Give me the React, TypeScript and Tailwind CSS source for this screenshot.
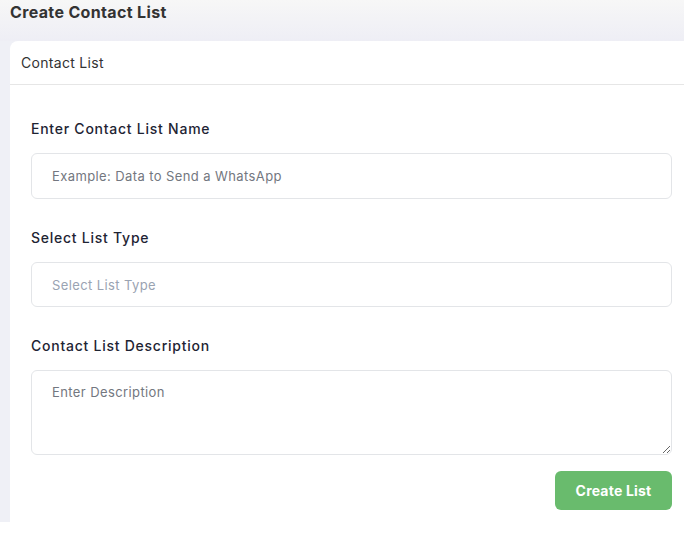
import { useState, FormEvent } from 'react'

const fieldClass =
  'w-full rounded-md border border-[#e3e5e8] bg-white px-[20px] text-[13px] tracking-[0.4px] text-[#374151] outline-none'

const labelClass = 'block text-[14px] font-medium leading-[22px] tracking-[0.75px] text-[#1e2433]'

export default function App() {
  const [listName, setListName] = useState('')
  const [listType, setListType] = useState('')
  const [description, setDescription] = useState('')

  const onSubmit = (event: FormEvent<HTMLFormElement>) => {
    event.preventDefault()
  }

  return (
    <div className="overflow-x-hidden bg-white font-['Inter',sans-serif]">
      <div className="bg-[#eff0f6]">
        <div className="h-[41px] bg-gradient-to-b from-[#f7f7f7] to-[#eeeef5] pl-[10px] pt-[1px]">
          <h1 className="text-[16px] font-bold leading-[22px] tracking-[0.35px] text-[#333333]">
            Create Contact List
          </h1>
        </div>

        <div className="ml-[10px] w-[683px] rounded-tl-lg bg-white">
          <div className="flex h-[44px] items-center border-b border-[#e6e6e6] px-[11px]">
            <h2 className="text-[14px] tracking-[0.3px] text-[#333333]">Contact List</h2>
          </div>

          <form className="pl-[21px] pr-[21px] pb-[12px] pt-[33px]" onSubmit={onSubmit}>
            <label className="block">
              <span className={labelClass}>Enter Contact List Name</span>
              <input
                className={`${fieldClass} mt-[13px] h-[46px] placeholder:text-[#737780]`}
                placeholder="Example: Data to Send a WhatsApp"
                value={listName}
                onChange={(e) => setListName(e.target.value)}
              />
            </label>

            <label className="mt-[28px] block">
              <span className={labelClass}>Select List Type</span>
              <input
                className={`${fieldClass} mt-[13px] h-[45px] placeholder:text-[#9aa3b2]`}
                placeholder="Select List Type"
                value={listType}
                onChange={(e) => setListType(e.target.value)}
              />
            </label>

            <label className="mt-[28px] block">
              <span className={labelClass}>Contact List Description</span>
              <textarea
                className={`${fieldClass} mt-[13px] block h-[85px] py-[12px] leading-[18px] placeholder:text-[#737780]`}
                placeholder="Enter Description"
                value={description}
                onChange={(e) => setDescription(e.target.value)}
              />
            </label>

            <div className="mt-[16px] flex justify-end">
              <button
                type="submit"
                className="h-[39px] w-[117px] rounded-md bg-[#69bb6d] text-[14px] font-bold tracking-[0.2px] text-white"
              >
                Create List
              </button>
            </div>
          </form>
        </div>
      </div>
    </div>
  )
}
